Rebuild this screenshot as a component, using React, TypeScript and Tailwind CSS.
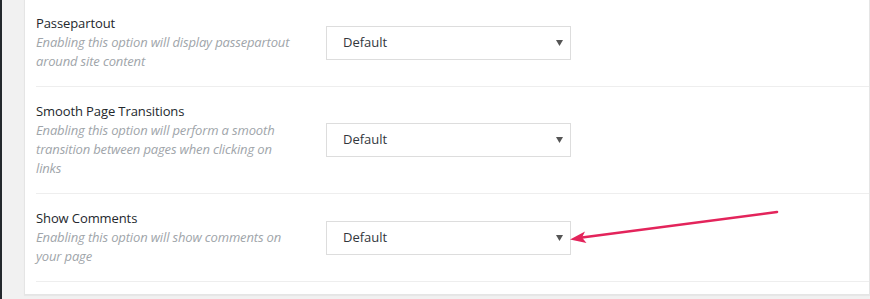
import React from "react";

const rows = [
  {
    title: "Passepartout",
    desc: "Enabling this option will display passepartout around site content",
  },
  {
    title: "Smooth Page Transitions",
    desc: "Enabling this option will perform a smooth transition between pages when clicking on links",
  },
  {
    title: "Show Comments",
    desc: "Enabling this option will show comments on your page",
  },
];

function Select() {
  return (
    <div className="relative flex h-[34px] w-[245px] items-center border border-[#dddddd] bg-white pl-[16px] text-[13px] text-[#32373c]">
      <span>Default</span>
      <svg
        className="absolute right-[7px] top-[13px]"
        width="7"
        height="6"
        viewBox="0 0 7 6"
      >
        <path d="M0 0 H7 L3.5 6 Z" fill="#555555" />
      </svg>
    </div>
  );
}

export default function App() {
  return (
    <div
      className="relative flex h-[299px] w-[870px] overflow-hidden bg-[#f1f1f1]"
      style={{ fontFamily: '"Open Sans", "Noto Sans", sans-serif' }}
    >
      <div className="w-[2px] shrink-0 bg-[#23282d]" />
      <div className="ml-[22px] flex-1">
        <div className="-mt-[3px] border border-[#e5e5e5] bg-white pb-[12px] pl-[11px] shadow-[0_1px_1px_rgba(0,0,0,0.04)]">
          {rows.map((r) => (
            <div
              key={r.title}
              className="flex items-center border-t border-[#eeeeee] py-[15px] last:border-b"
            >
              <div className="w-[290px] shrink-0 pr-[32px]">
                <div className="text-[13px] leading-[19px] tracking-[-0.1px] text-[#23282d]">
                  {r.title}
                </div>
                <div className="text-[13px] italic leading-[19px] tracking-[-0.15px] text-[#a0a5aa]">
                  {r.desc}
                </div>
              </div>
              <Select />
            </div>
          ))}
        </div>
      </div>
      <svg
        className="pointer-events-none absolute left-0 top-0"
        width="870"
        height="299"
        viewBox="0 0 870 299"
      >
        <line
          x1="777"
          y1="212"
          x2="582"
          y2="237.5"
          stroke="#e3245b"
          strokeWidth="2.6"
          strokeLinecap="round"
        />
        <path d="M570 239.5 L585 231.5 L582 237.5 L586.5 243 Z" fill="#e3245b" />
      </svg>
    </div>
  );
}
